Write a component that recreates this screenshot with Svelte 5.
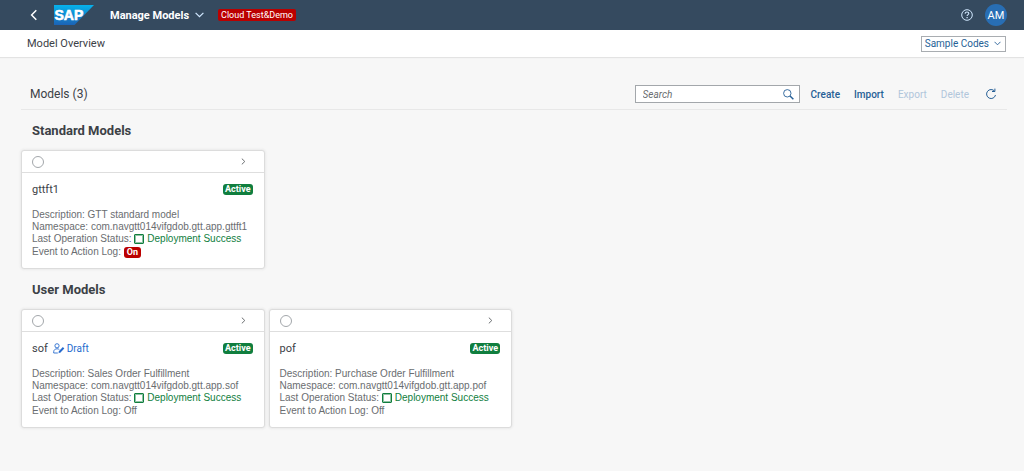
<script>
  const groups = [
    {
      title: 'Standard Models',
      models: [
        { name: 'gttft1', draft: false, description: 'GTT standard model', log: true }
      ]
    },
    {
      title: 'User Models',
      models: [
        { name: 'sof', draft: true, description: 'Sales Order Fulfillment', log: false },
        { name: 'pof', draft: false, description: 'Purchase Order Fulfillment', log: false }
      ]
    }
  ];
  let query = $state('');
  let selected = $state('');
</script>

<header class="shell">
  <button class="icon-button back" aria-label="Back">
    <svg width="8" height="12" viewBox="0 0 8 12"><path d="M6.3 1.2 1.6 6l4.7 4.8" fill="none" stroke="currentColor" stroke-width="1.5" /></svg>
  </button>
  <svg class="logo" width="40" height="20" viewBox="0 0 40 20" role="img" aria-label="SAP">
    <defs>
      <linearGradient id="logo-blue" x1="0" y1="0" x2="0" y2="1">
        <stop offset="0" stop-color="#06b2ec" />
        <stop offset="1" stop-color="#1b63b6" />
      </linearGradient>
    </defs>
    <path d="M0 0h40L20.500 20H0z" fill="url(#logo-blue)" />
    <text x="0.500" y="15" class="logo-text">SAP</text>
  </svg>
  <button class="app-title">
    Manage Models
    <svg width="9" height="6" viewBox="0 0 9 6"><path d="M.6.8 4.500 4.700 8.400.8" fill="none" stroke="currentColor" stroke-width="1.200" /></svg>
  </button>
  <span class="system">Cloud Test&amp;Demo</span>
  <button class="icon-button help" aria-label="Help">
    <svg width="12" height="12" viewBox="0 0 12 12" fill="none" stroke="currentColor">
      <circle cx="6" cy="6" r="5.300" />
      <path d="M4.200 4.700c0-1.100.8-1.700 1.800-1.700s1.800.6 1.800 1.500c0 1.200-1.700 1.200-1.700 2.600" stroke-width="1.100" />
      <path d="M6.100 8v1.200" stroke-width="1.200" />
    </svg>
  </button>
  <button class="avatar" aria-label="User profile">AM</button>
</header>

<div class="page-bar">
  <h1>Model Overview</h1>
  <button class="samples">
    Sample Codes
    <svg width="7" height="5" viewBox="0 0 7 5"><path d="M.5.8 3.500 3.800 6.500.8" fill="none" stroke="currentColor" stroke-width=".9" /></svg>
  </button>
</div>

<main>
  <div class="toolbar">
    <h2>Models (3)</h2>
    <div class="search">
      <input type="text" placeholder="Search" aria-label="Search" bind:value={query} />
      <button class="icon-button" aria-label="Start search">
        <svg width="11" height="11" viewBox="0 0 11 11" fill="none" stroke="currentColor">
          <circle cx="4.300" cy="4.300" r="3.700" stroke-width=".9" />
          <path d="m7 7 3.400 3.200" stroke-width="1.500" />
        </svg>
      </button>
    </div>
    <div class="actions">
      <button class="action">Create</button>
      <button class="action">Import</button>
      <button class="action" disabled>Export</button>
      <button class="action" disabled>Delete</button>
    </div>
    <button class="icon-button refresh" aria-label="Refresh">
      <svg width="12" height="12" viewBox="0 0 12 12" fill="none" stroke="currentColor">
        <path d="M9.600 3.200A4.500 4.500 0 1 0 10.500 7" />
        <path d="M9.900.6v2.900H7" />
      </svg>
    </button>
  </div>

  {#each groups as group}
    <section>
      <h3>{group.title}</h3>
      <div class="cards">
        {#each group.models as model}
          <article class="card">
            <div class="card-head">
              <input type="radio" name="model" value={model.name} bind:group={selected} aria-label="Select {model.name}" />
              <button class="icon-button" aria-label="Open {model.name}">
                <svg width="5" height="7" viewBox="0 0 5 7"><path d="m.8.6 3 2.900-3 2.900" fill="none" stroke="currentColor" stroke-width="1" /></svg>
              </button>
            </div>
            <div class="card-body">
              <div class="name-row">
                <h4>{model.name}</h4>
                {#if model.draft}
                  <a class="draft" href="#draft">
                    <svg width="12" height="11" viewBox="0 0 12 11" fill="none" stroke="currentColor">
                      <circle cx="4" cy="2.800" r="2.100" stroke-width=".9" />
                      <path d="M4.800 10H.7V8.700C.8 6.900 2.200 5.800 4 5.800c.9 0 1.700.2 2.300.7" stroke-width=".9" />
                      <path d="m6.300 9.300 4.300-4.500" stroke-width="2" />
                      <path d="m5.500 10.300.4-1.600 1.200 1.100z" fill="currentColor" stroke="none" />
                    </svg>
                    Draft
                  </a>
                {/if}
                <span class="badge active">Active</span>
              </div>
              <p>Description: {model.description}</p>
              <p>Namespace: com.navgtt014vifgdob.gtt.app.{model.name}</p>
              <p>Last Operation Status: <span class="status"><span class="square"></span>Deployment Success</span></p>
              <p class="log">
                Event to Action Log:
                {#if model.log}<span class="badge on">On</span>{:else}Off{/if}
              </p>
            </div>
          </article>
        {/each}
      </div>
    </section>
  {/each}
</main>

<style>
  :global(body) {
    margin: 0;
    background: #f7f7f7;
    color: #3c4146;
    font-family: Roboto, "Liberation Sans", sans-serif;
    font-size: 10px;
  }
  h1, h2, h3, h4, p { margin: 0; font-weight: 400; }
  button, input { font: inherit; margin: 0; box-sizing: border-box; }
  button { background: none; border: 0; padding: 0; color: inherit; cursor: pointer; white-space: nowrap; }
  svg { display: block; flex: none; }
  .icon-button { display: flex; align-items: center; justify-content: center; }

  .shell {
    display: flex;
    align-items: center;
    height: 30px;
    padding: 0 17px 0 30px;
    background: #354a5f;
    color: #d1e8ff;
  }
  .back { margin-right: 16px; color: #fff; }
  .logo-text { font: 700 14px "Liberation Sans", sans-serif; fill: #fff; stroke: #fff; stroke-width: .6px; }
  .app-title {
    display: flex;
    align-items: center;
    gap: 6px;
    margin: 0 14px 0 16px;
    color: #fff;
    font-size: 11px;
    font-weight: 700;
  }
  .app-title svg { color: #d1e8ff; }
  .system {
    padding: 0 3px;
    border-radius: 2px;
    background: #b00;
    color: #fff;
    font-size: 9px;
    line-height: 12px;
  }
  .help { margin: 0 12px 0 auto; }
  .avatar {
    width: 22px;
    height: 22px;
    border-radius: 50%;
    background: #286eb4;
    color: #fff;
    font-size: 11px;
  }

  .page-bar {
    display: flex;
    align-items: center;
    justify-content: space-between;
    height: 27px;
    padding: 0 18px 0 27px;
    background: #fff;
    box-shadow: 0 1px 1px #e3e3e3;
  }
  h1 { font-size: 11px; }
  .samples {
    display: flex;
    align-items: center;
    gap: 5px;
    height: 16px;
    padding: 0 4px 0 3px;
    border: 1px solid #a9adb1;
    color: #265f96;
  }

  main { padding: 22px 17px 24px 21px; }
  .toolbar {
    display: flex;
    align-items: center;
    height: 30px;
    padding: 0 10px 0 9px;
    border-bottom: 1px solid #e8e8e8;
    color: #265f96;
  }
  h2 { margin-right: auto; color: #3c4146; font-size: 12px; }
  .search {
    display: flex;
    align-items: center;
    flex: 0 1 165px;
    box-sizing: border-box;
    height: 18px;
    padding: 0 5px 0 7px;
    border: 1px solid #a3a7ab;
    background: #fff;
  }
  .search input {
    flex: 1;
    min-width: 0;
    padding: 0;
    border: 0;
    outline: 0;
    background: none;
  }
  .search input::placeholder { color: #6a6d70; font-style: italic; opacity: 1; }
  .actions { display: flex; gap: 14px; margin: 0 16px 0 11px; }
  .action { font-weight: 500; }
  .action:disabled { color: #b1c6db; font-weight: 400; }

  h3 {
    padding: 13px 11px 11px;
    font-size: 13px;
    font-weight: 700;
    line-height: 16px;
  }
  .cards {
    display: grid;
    grid-template-columns: repeat(auto-fill, minmax(240px, 1fr));
    gap: 4px;
  }
  .card {
    border: 1px solid #dcdcdc;
    border-radius: 3px;
    background: #fff;
    box-shadow: 0 0 3px #dcdcdc;
  }
  .card-head {
    display: flex;
    align-items: center;
    justify-content: space-between;
    height: 21px;
    padding: 0 18px 0 10px;
    border-bottom: 1px solid #dedede;
    color: #6a6d70;
  }
  .card-head input {
    appearance: none;
    width: 12px;
    height: 12px;
    border: 1px solid #a3a7ab;
    border-radius: 50%;
    background: #fff;
  }
  .card-head input:checked { background: #265f96; box-shadow: inset 0 0 0 2px #fff; }
  .card-body { padding: 8px 11px 10px 10px; color: #6a6d70; }
  .name-row { display: flex; align-items: center; height: 16px; margin-bottom: 12px; }
  h4 { color: #3c4146; font-size: 11px; }
  .draft {
    display: flex;
    align-items: center;
    gap: 2px;
    margin-left: 5px;
    color: #276bce;
    text-decoration: none;
  }
  .badge {
    display: inline-block;
    padding: 0 2px;
    border-radius: 3px;
    color: #fff;
    font-family: Roboto, "Liberation Sans", sans-serif;
    font-size: 9px;
    font-weight: 700;
    line-height: 11px;
  }
  .active { margin-left: auto; background: #107e3e; }
  .on { padding: 0 3px; background: #b00; }
  p { font-family: "Liberation Sans", Arial, sans-serif; line-height: 12px; }
  .log { line-height: 13px; }
  .status { color: #107e3e; }
  .square {
    display: inline-block;
    box-sizing: border-box;
    width: 10px;
    height: 10px;
    margin-right: 3px;
    border: 1px solid #107e3e;
    border-radius: 1px;
    box-shadow: inset 0 0 0 1px #8fc3a5;
    vertical-align: -2px;
  }
</style>
